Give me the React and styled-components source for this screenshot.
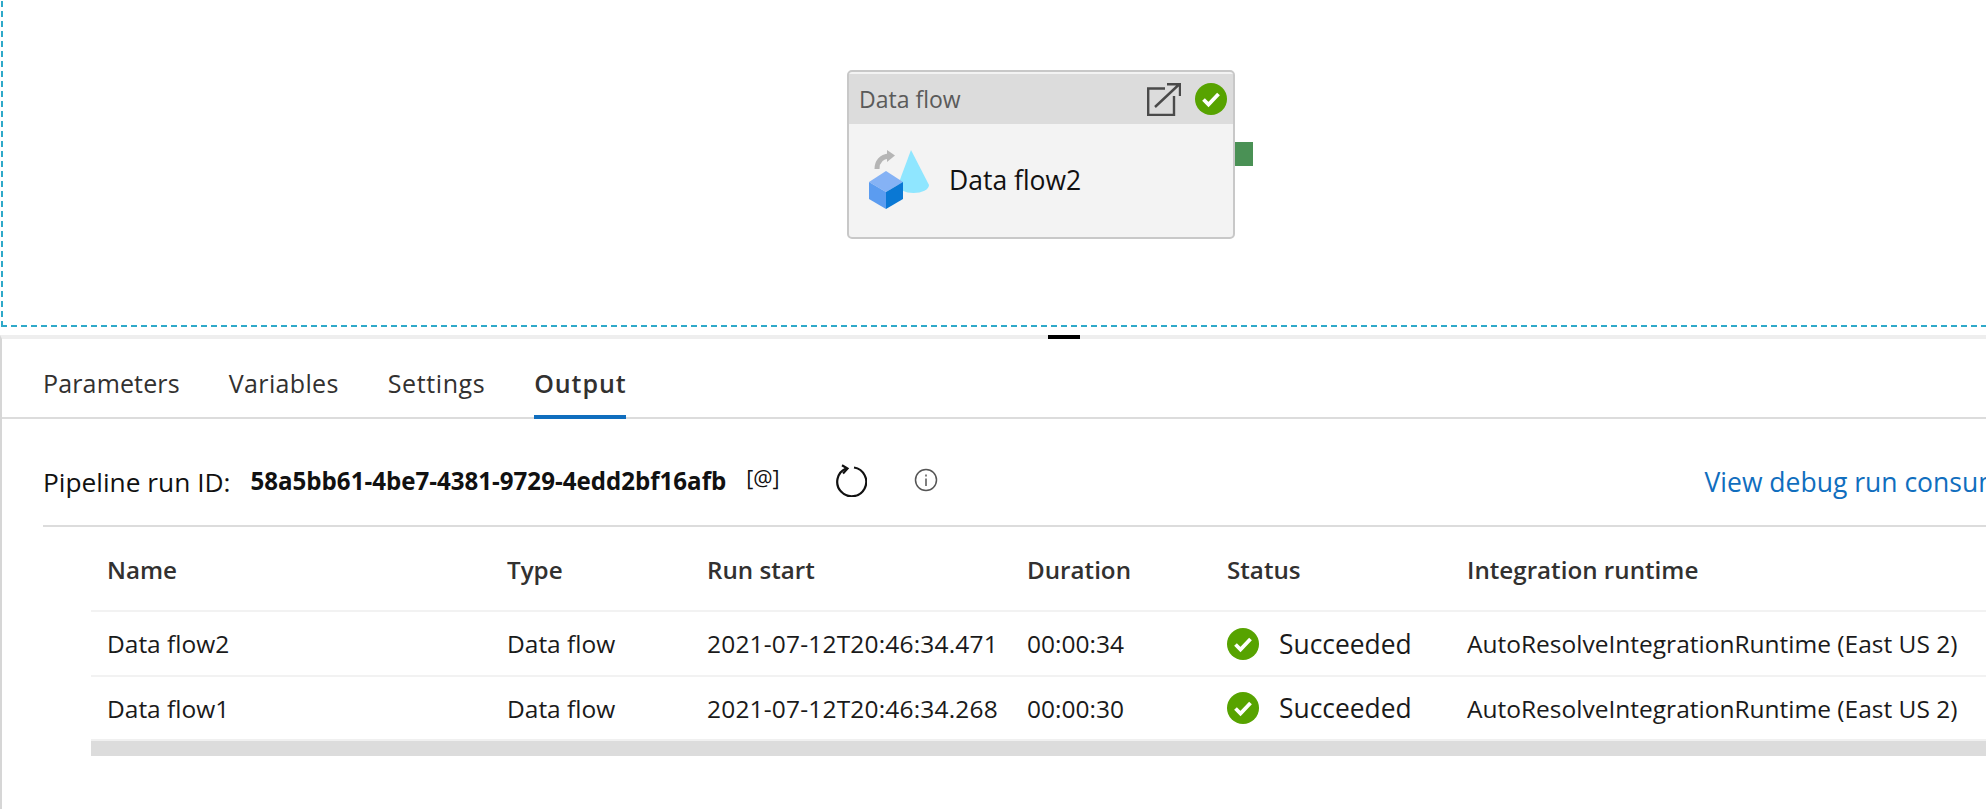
import React from "react";
import styled, { createGlobalStyle } from "styled-components";

const Global = createGlobalStyle`
  html, body { margin: 0; padding: 0; background: #fff; overflow: hidden; }
  body { font-family: "Open Sans", "Noto Sans", sans-serif; }
`;

const Page = styled.div`
  width: 1986px;
  height: 809px;
  display: flex;
  flex-direction: column;
  overflow: hidden;
`;

const Canvas = styled.section`
  position: relative;
  height: 327px;
  flex: none;
  background-image:
    repeating-linear-gradient(90deg, #2fa9c9 0 6px, transparent 6px 10px),
    repeating-linear-gradient(180deg, #2fa9c9 0 6px, transparent 6px 10px);
  background-repeat: no-repeat;
  background-size: 100% 2px, 2px 100%;
  background-position: 1px 100%, 1px 1px;
`;

const Node = styled.div`
  position: absolute;
  left: 847px;
  top: 70px;
  width: 388px;
  height: 169px;
  box-sizing: border-box;
  border: 2px solid #c8c8c8;
  border-radius: 5px;
  background: #f3f3f3;
  padding-top: 2px;
`;

const NodeHeader = styled.div`
  height: 50px;
  background: #dcdcdc;
  display: flex;
  align-items: center;
  gap: 14px;
  padding: 0 6px 0 10px;
  color: #5a5a5a;
  font-size: 23px;
`;

const NodeHeaderTitle = styled.span`
  flex: 1;
`;

const NodeBody = styled.div`
  display: flex;
  align-items: center;
  padding-left: 20px;
  height: 110px;
`;

const NodeIcon = styled.svg`
  flex: none;
  margin-top: 2px;
`;

const NodeName = styled.span`
  margin-left: 18px;
  margin-top: 2px;
  font-size: 26.5px;
  color: #111;
`;

const Port = styled.div`
  position: absolute;
  left: 1235px;
  top: 142px;
  width: 18px;
  height: 24px;
  background: #4a9155;
`;

const Panel = styled.section`
  flex: 1;
  position: relative;
  margin-top: 8px;
  border-top: 4px solid #eeeeee;
  border-left: 2px solid #d6d6d6;
`;

const Handle = styled.div`
  position: absolute;
  left: 1046px;
  top: -4px;
  width: 32px;
  height: 4px;
  background: #000;
`;

const Tabs = styled.div`
  height: 80px;
  box-sizing: border-box;
  display: flex;
  align-items: stretch;
  gap: 49px;
  padding-left: 41px;
  border-bottom: 2px solid #dcdcdc;
`;

const Tab = styled.div`
  display: flex;
  align-items: center;
  height: 80px;
  box-sizing: border-box;
  padding-top: 12px;
  font-size: 25px;
  letter-spacing: ${(p) => p.$spacing}px;
  font-weight: ${(p) => (p.$active ? 600 : 400)};
  color: #323130;
  border-bottom: 4px solid ${(p) => (p.$active ? "#106ebe" : "transparent")};
`;

const RunBar = styled.div`
  height: 108px;
  margin-left: 41px;
  padding-top: 16px;
  box-sizing: border-box;
  display: flex;
  align-items: center;
  border-bottom: 2px solid #dcdcdc;
  white-space: nowrap;
`;

const RunLabel = styled.span`
  font-size: 26.3px;
  color: #111;
  margin-top: 3px;
`;

const RunId = styled.span`
  margin-left: 20px;
  font-size: 24.1px;
  font-weight: 700;
  color: #111;
  margin-top: 1px;
`;

const Mention = styled.span`
  margin-left: 20px;
  margin-top: -5px;
  font-size: 21.5px;
  font-weight: 500;
  color: #111;
`;

const RefreshIcon = styled.svg`
  margin-left: 55px;
  flex: none;
`;

const InfoIcon = styled.svg`
  margin-left: 47px;
  flex: none;
`;

const ConsumptionLink = styled.a`
  margin-left: 767px;
  margin-top: 3px;
  font-size: 26.5px;
  color: #106ebe;
`;

const Table = styled.div`
  margin-left: 89px;
  white-space: nowrap;
`;

const Row = styled.div`
  display: grid;
  grid-template-columns: 400px 200px 320px 200px 240px 1fr;
  align-items: center;
  padding-left: 16px;
  height: 65px;
  box-sizing: border-box;
  border-bottom: 2px solid #f2f2f2;
  font-size: 24.5px;
  color: #1a1a1a;
`;

const HeaderRow = styled(Row)`
  height: 85px;
  padding-top: 2px;
`;

const LastRow = styled(Row)`
  height: 62px;
  border-bottom: none;
`;

const HeaderCell = styled.div`
  font-size: 24.2px;
  font-weight: 600;
  color: #323130;
`;

const DateCell = styled.div`
  letter-spacing: 0.18px;
`;

const Status = styled.div`
  display: flex;
  align-items: center;
  gap: 20px;
  font-size: 26.4px;
`;

const Scrollbar = styled.div`
  height: 15px;
  background: #dcdcdc;
  border-top: 2px solid #f0f0f0;
`;

function Check({ size }) {
  return (
    <svg width={size} height={size} viewBox="0 0 32 32" style={{ flex: "none" }}>
      <circle cx="16" cy="16" r="16" fill="#57a300" />
      <path d="M8.500 16.500l5 5 10-10.500" fill="none" stroke="#fff" strokeWidth="3.800" />
    </svg>
  );
}

function DataFlowIcon() {
  return (
    <NodeIcon width="62" height="60" viewBox="0 0 62 60">
      <path d="M42 0 L29 35 A15.500 8 0 0 0 60 35 Z" fill="#8fe6ff" />
      <path d="M8 19 C8 12 12 6.500 20 6" fill="none" stroke="#b5b5b5" strokeWidth="5" />
      <path d="M18 0 L26 5.500 L18 12 Z" fill="#b5b5b5" />
      <path d="M0 32 L17 21 L34 32 L17 42 Z" fill="#85b2f5" />
      <path d="M0 32 L17 42 L17 59 L0 49 Z" fill="#5b9cf0" />
      <path d="M34 32 L17 42 L17 59 L34 49 Z" fill="#0a78d4" />
    </NodeIcon>
  );
}

const columns = ["Name", "Type", "Run start", "Duration", "Status", "Integration runtime"];

function RunCells({ name, start, duration }) {
  return (
    <>
      <div>{name}</div>
      <div>Data flow</div>
      <DateCell>{start}</DateCell>
      <div>{duration}</div>
      <Status>
        <Check size={32} />
        Succeeded
      </Status>
      <div>AutoResolveIntegrationRuntime (East US 2)</div>
    </>
  );
}

export default function App() {
  return (
    <Page>
      <Global />
      <Canvas>
        <Node>
          <NodeHeader>
            <NodeHeaderTitle>Data flow</NodeHeaderTitle>
            <svg width="34" height="33" viewBox="0 0 34 33" fill="none" stroke="#4a4a4a" strokeWidth="2.400">
              <path d="M18 5.500H1.200V32H27V13" />
              <path d="M8 24L32 1.500M20 1.200H33V13" />
            </svg>
            <Check size={32} />
          </NodeHeader>
          <NodeBody>
            <DataFlowIcon />
            <NodeName>Data flow2</NodeName>
          </NodeBody>
        </Node>
        <Port />
      </Canvas>
      <Panel>
        <Handle />
        <Tabs>
          <Tab $spacing={0.15}>Parameters</Tab>
          <Tab $spacing={0.35}>Variables</Tab>
          <Tab $spacing={0.6}>Settings</Tab>
          <Tab $spacing={0.9} $active>Output</Tab>
        </Tabs>
        <RunBar>
          <RunLabel>Pipeline run ID:</RunLabel>
          <RunId>58a5bb61-4be7-4381-9729-4edd2bf16afb</RunId>
          <Mention>[@]</Mention>
          <RefreshIcon width="32" height="33" viewBox="0 0 32 33" fill="none" stroke="#111" strokeWidth="2.200">
            <path d="M19 3.500A14.500 14.500 0 1 1 11 4.500" />
            <path d="M7 1.200L12.500 4.500 8 9.500" />
          </RefreshIcon>
          <InfoIcon width="24" height="24" viewBox="0 0 24 24" fill="none" stroke="#555" strokeWidth="1.500">
            <circle cx="12" cy="12" r="10.500" />
            <path d="M12 10.500V18M12 6.500V8.500" />
          </InfoIcon>
          <ConsumptionLink>View debug run consumption</ConsumptionLink>
        </RunBar>
        <Table>
          <HeaderRow>
            {columns.map((c) => (
              <HeaderCell key={c}>{c}</HeaderCell>
            ))}
          </HeaderRow>
          <Row>
            <RunCells name="Data flow2" start="2021-07-12T20:46:34.471" duration="00:00:34" />
          </Row>
          <LastRow>
            <RunCells name="Data flow1" start="2021-07-12T20:46:34.268" duration="00:00:30" />
          </LastRow>
          <Scrollbar />
        </Table>
      </Panel>
    </Page>
  );
}
